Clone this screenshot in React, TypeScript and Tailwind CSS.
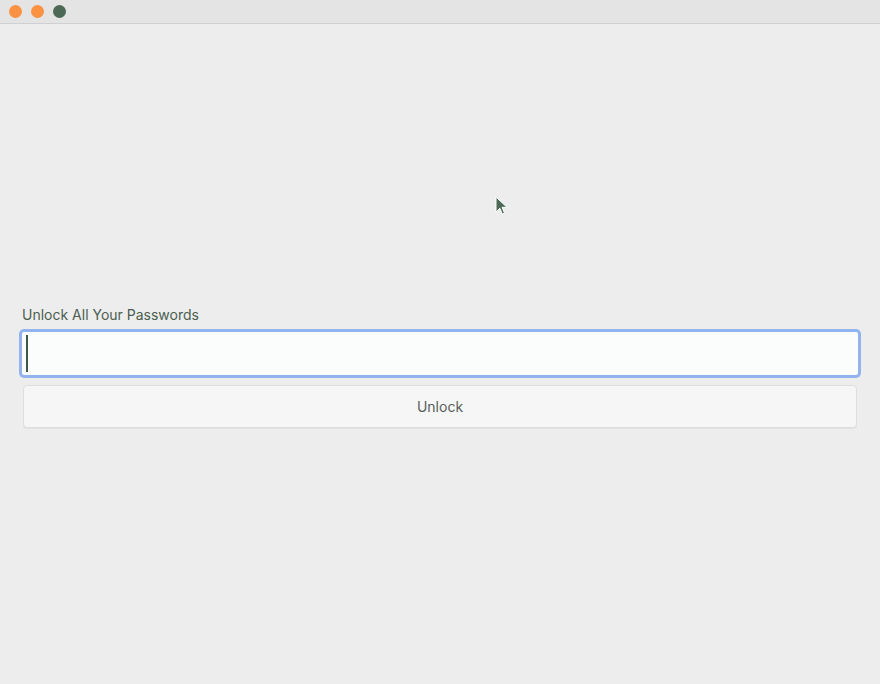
import React from 'react';

const App = () => {
  return (
    <div className="relative w-[880px] h-[684px] bg-[#ededed] flex flex-col" style={{ fontFamily: 'Inter, "Liberation Sans", sans-serif' }}>
      {/* title bar */}
      <div className="h-[24px] bg-[#e4e4e4] border-b border-[#cfcfd4] flex items-center gap-[9px] pl-[9px]">
        <div className="w-[13px] h-[13px] rounded-full bg-[#fb9142]" />
        <div className="w-[13px] h-[13px] rounded-full bg-[#fb9142]" />
        <div className="w-[13px] h-[13px] rounded-full bg-[#4c6955]" />
      </div>

      <div className="flex flex-col pl-[19px] pr-[19px] pt-[282px]">
        <label className="text-[14px] text-[#4b5e50] pl-[3px] leading-[17px] mb-[6px]">Unlock All Your Passwords</label>
        <div className="h-[49px] rounded-[5px] bg-[#93b3ee] p-[3px]">
          <div className="h-full w-full bg-[#fbfdfc] rounded-[2px] flex items-center pl-[4px]">
            <div className="w-[2px] h-[37px] bg-[#3f5847]" />
          </div>
        </div>
        <button className="mt-[7px] mx-[4px] h-[43px] rounded-[4px] bg-[#f6f6f6] border border-[#dedede] text-[14px] text-[#56605a] shadow-[0_1px_0_#e2e2e2]">
          Unlock
        </button>
      </div>

      {/* mouse pointer */}
      <svg className="absolute left-[495px] top-[196px]" width="13" height="20" viewBox="0 0 13 20">
        <path d="M1 1 L1 16 L4.8 12.2 L7.3 18 L9.5 17 L7 11.3 L12 11.3 Z" fill="#4c6955" stroke="#ffffff" strokeWidth="1" />
      </svg>
    </div>
  );
};

export default App;
